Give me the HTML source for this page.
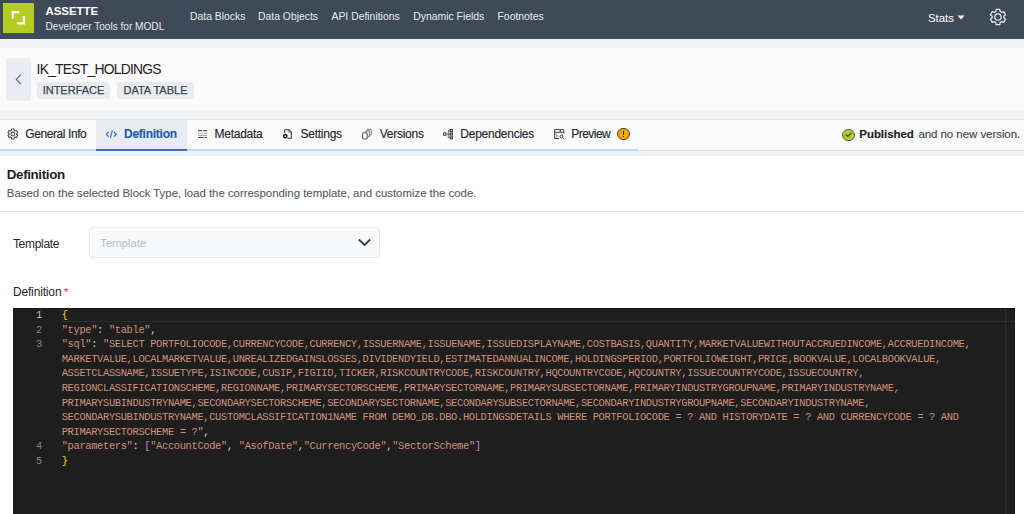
<!DOCTYPE html>
<html><head><meta charset="utf-8">
<style>
*{box-sizing:border-box;margin:0;padding:0}
html,body{width:1024px;height:514px;overflow:hidden;background:#fff;font-family:"Liberation Sans",sans-serif}
.abs{position:absolute;white-space:nowrap}
#hdr{position:absolute;left:0;top:0;width:1024px;height:39px;background:#3e4a57}
#band1{position:absolute;left:0;top:39px;width:1024px;height:9px;background:#eff3f6}
#titlebar{position:absolute;left:0;top:48px;width:1024px;height:62px;background:#fafafa}
#band2{position:absolute;left:0;top:110px;width:1024px;height:10px;background:#eff3f6;border-bottom:1px solid #e3e7ec}
#tabs{position:absolute;left:0;top:120px;width:1024px;height:31px;background:#fafafa}
#band3{position:absolute;left:0;top:151px;width:1024px;height:5px;background:#eff2f5}
.nav{color:#e8ebef;font-size:10.4px;line-height:12px;top:11px}
.tab{font-size:12px;letter-spacing:-0.25px;color:#23272d;line-height:14px;top:7.2px;-webkit-text-stroke:0.15px currentColor}
.badge{background:#e8ecf1;border-radius:4px;height:17.1px;top:81.6px;color:#3a4350;font-size:11px;line-height:16.4px;text-align:center;-webkit-text-stroke:0.25px #3a4350}
#editor{position:absolute;left:13px;top:308px;width:1002px;height:206px;background:#1e1e1e;overflow:hidden}
.ln{position:absolute;left:0;width:29px;text-align:right;color:#858585;font-family:"Liberation Mono",monospace;font-size:10.4px;letter-spacing:-0.35px}
.code{position:absolute;left:48.7px;color:#ce9178;font-family:"Liberation Mono",monospace;font-size:10.4px;letter-spacing:-0.335px;white-space:pre}
.code,.ln{line-height:14px}
.y{color:#ffd700}.w{color:#d4d4d4}.p{color:#da70d6}
</style></head><body>
<div id="hdr">
  <div class="abs" style="left:3px;top:3px;width:31px;height:30px;background:#b5cc22">
    <svg width="31" height="30" style="position:absolute;left:0;top:0">
      <path d="M9.8 15.7V9.2H16.3" fill="none" stroke="#fff" stroke-width="2.3"/>
      <path d="M14.3 20.35H20.95V13.3" fill="none" stroke="#fff" stroke-width="2.3"/>
    </svg>
  </div>
  <div class="abs" style="left:45.5px;top:5px;color:#fff;font-weight:bold;font-size:11.4px;line-height:13px">ASSETTE</div>
  <div class="abs" style="left:45.5px;top:21px;color:#e6e9ec;font-size:10.1px;line-height:12px">Developer Tools for MODL</div>
  <div class="abs nav" style="left:190px">Data Blocks</div>
  <div class="abs nav" style="left:258px">Data Objects</div>
  <div class="abs nav" style="left:331.5px">API Definitions</div>
  <div class="abs nav" style="left:413.3px">Dynamic Fields</div>
  <div class="abs nav" style="left:497.5px">Footnotes</div>
  <div class="abs" style="left:928px;top:11px;color:#fff;font-size:11.4px;line-height:14px">Stats</div>
  <svg class="abs" style="left:957px;top:15px" width="8" height="5"><path d="M0.5 0.5H7.5L4 4.5Z" fill="#fff"/></svg>
  <svg class="abs" style="left:988.1px;top:7.1px" width="20" height="20"><path fill="none" stroke="#e6e9ec" stroke-width="1.25" stroke-linejoin="round" d="M7.79 4.53 L8.23 2.35 L11.77 2.35 L12.21 4.53 L13.63 5.35 L15.74 4.65 L17.51 7.70 L15.84 9.18 L15.84 10.82 L17.51 12.30 L15.74 15.35 L13.63 14.65 L12.21 15.47 L11.77 17.65 L8.23 17.65 L7.79 15.47 L6.37 14.65 L4.26 15.35 L2.49 12.30 L4.16 10.82 L4.16 9.18 L2.49 7.70 L4.26 4.65 L6.37 5.35Z"/><circle cx="10" cy="10" r="3.2" fill="none" stroke="#e6e9ec" stroke-width="1.25"/></svg>
</div>
<div id="band1"></div>
<div id="titlebar">
  <div class="abs" style="left:6px;top:10px;width:25px;height:43px;background:#e9edf2;border-radius:2px">
    <svg width="25" height="43" style="position:absolute;left:0;top:0"><path d="M14.8 16.7L10.3 21.4L14.8 26.1" fill="none" stroke="#5f656d" stroke-width="1.1"/></svg>
  </div>
  <div class="abs" style="left:36.6px;top:13.6px;font-size:13.9px;letter-spacing:-0.78px;color:#1f2328;line-height:15px">IK_TEST_HOLDINGS</div>
</div>
<div class="abs badge" style="left:37px;width:73px">INTERFACE</div>
<div class="abs badge" style="left:117px;width:77px">DATA TABLE</div>
<div id="band2"></div>
<div id="tabs">
  <div class="abs" style="left:96px;top:0;width:91px;height:28.5px;background:#e8ecf2"></div><div class="abs" style="left:0;top:29.6px;width:1024px;height:1px;background:#dfe3e8"></div>
  <div class="abs" style="left:0;top:29px;width:639px;height:1.9px;background:#c2d8f1"></div>
  <div class="abs" style="left:96px;top:29px;width:91px;height:2px;background:#3b70b6"></div>
  <svg class="abs" style="left:0;top:0" width="30" height="30"><path fill="none" stroke="#4a4f56" stroke-width="1.1" stroke-linejoin="round" d="M11.43 10.48 L11.70 9.03 L14.00 9.03 L14.27 10.48 L15.19 11.01 L16.58 10.52 L17.73 12.51 L16.61 13.47 L16.61 14.53 L17.73 15.49 L16.58 17.48 L15.19 16.99 L14.27 17.52 L14.00 18.97 L11.70 18.97 L11.43 17.52 L10.51 16.99 L9.12 17.48 L7.97 15.49 L9.09 14.53 L9.09 13.47 L7.97 12.51 L9.12 10.52 L10.51 11.01Z"/><circle cx="12.85" cy="14" r="1.9" fill="none" stroke="#4a4f56" stroke-width="1.1"/></svg>
  <div class="abs tab" style="left:25.3px;letter-spacing:-0.42px">General Info</div>
  <svg class="abs" style="left:100px;top:0" width="20" height="30"><path d="M8.3 12.2L6.4 14.3L8.3 16.4M14.3 12.2L16.3 14.3L14.3 16.4M12.2 10.8L10.5 17.4" fill="none" stroke="#3f74bb" stroke-width="1.25" stroke-linecap="round" stroke-linejoin="round"/></svg>
  <div class="abs tab" style="left:124px;font-weight:bold;color:#225ca8">Definition</div>
  <svg class="abs" style="left:190px;top:0" width="20" height="30"><path d="M8 10.6H12.2M13.2 10.6H17.1" stroke="#555" stroke-width="1.2"/><path d="M8 13.3H9.3M10.6 13.3H12.6M14 13.3H17.1" stroke="#999" stroke-width="1"/><path d="M8 15.4H17.1" stroke="#888" stroke-width="0.8"/><path d="M8 17.5H13.6M14.6 17.5H17.1" stroke="#444" stroke-width="1.1"/></svg>
  <div class="abs tab" style="left:214.5px">Metadata</div>
  <svg class="abs" style="left:280px;top:0" width="16" height="30"><path d="M4.7 12.8V9.7H8.9L11.3 12.1V18.3H7.4" fill="none" stroke="#3a3a3a" stroke-width="1.05" stroke-linejoin="round"/><path d="M8.8 9.9V12.2H11.1" fill="none" stroke="#555" stroke-width="0.8"/><path fill="#111" fill-rule="evenodd" d="M4.36 14.42 L4.48 13.72 L6.02 13.72 L6.14 14.42 L6.26 14.49 L6.92 14.24 L7.70 15.58 L7.15 16.03 L7.15 16.17 L7.70 16.62 L6.92 17.96 L6.26 17.71 L6.14 17.78 L6.02 18.48 L4.48 18.48 L4.36 17.78 L4.24 17.71 L3.58 17.96 L2.80 16.62 L3.35 16.17 L3.35 16.03 L2.80 15.58 L3.58 14.24 L4.24 14.49Z M6.1 16.1 A0.85 0.85 0 1 0 4.4 16.1 A0.85 0.85 0 1 0 6.1 16.1Z"/></svg>
  <div class="abs tab" style="left:300.5px">Settings</div>
  <svg class="abs" style="left:360px;top:0" width="16" height="30"><path d="M7.6 10.9V9.4H11.3V14.9H9.8" fill="none" stroke="#7a7a7a" stroke-width="0.95" stroke-linejoin="round"/><path d="M5.9 12.6V10.9H9.4V16.8H7.8" fill="none" stroke="#6a6a6a" stroke-width="0.95" stroke-linejoin="round"/><rect x="2.6" y="12.7" width="4.6" height="6.2" rx="1.1" fill="none" stroke="#555" stroke-width="1.05"/></svg>
  <div class="abs tab" style="left:379.7px">Versions</div>
  <svg class="abs" style="left:440px;top:0" width="16" height="30"><rect x="3.6" y="12.9" width="2.2" height="2.4" fill="none" stroke="#444" stroke-width="1"/><path d="M5.8 14.1H8M8.3 10.7V17.4H10M8.3 10.7H10M8.3 14.1H10" fill="none" stroke="#555" stroke-width="0.9"/><rect x="10.2" y="9.5" width="2.2" height="2.1" fill="none" stroke="#333" stroke-width="1.05"/><rect x="10.2" y="13.1" width="2.2" height="2" fill="none" stroke="#333" stroke-width="1.05"/><rect x="10.2" y="16.8" width="2.2" height="2" fill="none" stroke="#333" stroke-width="1.05"/></svg>
  <div class="abs tab" style="left:460.3px">Dependencies</div>
  <svg class="abs" style="left:550px;top:0" width="16" height="30"><path d="M9 18.5H4.6V9.6H13.8V13.5" fill="none" stroke="#444" stroke-width="1"/><path d="M4.6 12.3H13.8M10.2 9.6V12.3" fill="none" stroke="#444" stroke-width="1"/><path d="M6.3 13.3V17.8M6.3 15.2L8.4 16.3" fill="none" stroke="#888" stroke-width="0.8"/><circle cx="11.5" cy="16.4" r="1.5" fill="none" stroke="#333" stroke-width="1"/><path d="M12.6 17.5L14 18.8" stroke="#333" stroke-width="1"/></svg>
  <div class="abs tab" style="left:571.2px;letter-spacing:-0.52px">Preview</div>
  <div class="abs" style="left:617.3px;top:7.8px;width:12.5px;height:12.5px;border-radius:50%;background:#f8a802;border:1px solid #4a4235"></div>
  <div class="abs" style="left:622.9px;top:10.5px;width:1.4px;height:4.2px;background:#2a2a2a"></div>
  <div class="abs" style="left:622.9px;top:15.8px;width:1.4px;height:1.4px;background:#2a2a2a"></div>
  <div class="abs" style="left:842.3px;top:8.6px;width:12.5px;height:12.5px;border-radius:50%;background:#b3ce1f;border:1px solid #56606a"></div>
  <svg class="abs" style="left:842px;top:8px" width="13" height="13"><path d="M4.3 7L5.9 8.4L8.9 5.5" fill="none" stroke="#3a4048" stroke-width="1.3" stroke-linecap="round" stroke-linejoin="round"/></svg>
  <div class="abs tab" style="left:859.3px;top:6.8px;font-weight:bold;color:#1f2328;font-size:11.5px;letter-spacing:-0.05px">Published</div>
  <div class="abs tab" style="left:918.4px;top:6.8px;color:#434a54;font-size:11.5px;letter-spacing:-0.06px">and no new version.</div>
</div>
<div id="band3"></div>
<div class="abs" style="left:6.8px;top:167.1px;font-size:13.4px;letter-spacing:-0.38px;font-weight:bold;color:#1b1f24;line-height:16px">Definition</div>
<div class="abs" style="left:6.8px;top:185.5px;font-size:11.38px;color:#555c65;line-height:14px;-webkit-text-stroke:0.12px #555c65">Based on the selected Block Type, load the corresponding template, and customize the code.</div>
<div class="abs" style="left:0;top:211px;width:1024px;height:1px;background:#e4e8ec"></div>
<div class="abs" style="left:12.9px;top:237.2px;font-size:12px;letter-spacing:-0.3px;color:#24282e;line-height:14px">Template</div>
<div class="abs" style="left:89px;top:227.3px;width:291px;height:30.3px;background:#f8f9fa;border:1px solid #e8ebee;border-radius:3px"></div>
<div class="abs" style="left:100px;top:236px;font-size:11.6px;letter-spacing:-0.12px;color:#b5bfca;line-height:14px">Template</div>
<svg class="abs" style="left:357px;top:237.8px" width="15" height="9"><path d="M1.8 1.5L7.5 7L13.2 1.5" fill="none" stroke="#3a3f46" stroke-width="1.9"/></svg>
<div class="abs" style="left:12.9px;top:284.6px;font-size:12px;letter-spacing:-0.15px;color:#24282e;line-height:14px">Definition<span style="color:#f0302a;margin-left:2.6px;font-size:11.4px">*</span></div>
<div id="editor">
<div class="abs" style="left:49px;top:0.3px;width:960px;height:14px;border:1px solid #2c2c2c;border-right:none"></div>
<div class="abs" style="left:992px;top:0.5px;width:10px;height:206px;border-left:1px solid #2b2b2b"></div><div class="abs" style="left:0;top:0;width:1002px;height:0.8px;background:#161616"></div>
<div class="ln" style="top:0.10px;color:#c6c6c6">1</div>
<div class="code" style="top:0.10px"><span class="y">{</span></div>
<div class="ln" style="top:14.67px;color:#858585">2</div>
<div class="code" style="top:14.67px">"type"<span class="w">: </span>"table"<span class="w">,</span></div>
<div class="ln" style="top:29.24px;color:#858585">3</div>
<div class="code" style="top:29.24px">"sql"<span class="w">: </span>"SELECT PORTFOLIOCODE,CURRENCYCODE,CURRENCY,ISSUERNAME,ISSUENAME,ISSUEDISPLAYNAME,COSTBASIS,QUANTITY,MARKETVALUEWITHOUTACCRUEDINCOME,ACCRUEDINCOME,</div>
<div class="code" style="top:43.81px">MARKETVALUE,LOCALMARKETVALUE,UNREALIZEDGAINSLOSSES,DIVIDENDYIELD,ESTIMATEDANNUALINCOME,HOLDINGSPERIOD,PORTFOLIOWEIGHT,PRICE,BOOKVALUE,LOCALBOOKVALUE,</div>
<div class="code" style="top:58.38px">ASSETCLASSNAME,ISSUETYPE,ISINCODE,CUSIP,FIGIID,TICKER,RISKCOUNTRYCODE,RISKCOUNTRY,HQCOUNTRYCODE,HQCOUNTRY,ISSUECOUNTRYCODE,ISSUECOUNTRY,</div>
<div class="code" style="top:72.95px">REGIONCLASSIFICATIONSCHEME,REGIONNAME,PRIMARYSECTORSCHEME,PRIMARYSECTORNAME,PRIMARYSUBSECTORNAME,PRIMARYINDUSTRYGROUPNAME,PRIMARYINDUSTRYNAME,</div>
<div class="code" style="top:87.52px">PRIMARYSUBINDUSTRYNAME,SECONDARYSECTORSCHEME,SECONDARYSECTORNAME,SECONDARYSUBSECTORNAME,SECONDARYINDUSTRYGROUPNAME,SECONDARYINDUSTRYNAME,</div>
<div class="code" style="top:102.09px">SECONDARYSUBINDUSTRYNAME,CUSTOMCLASSIFICATION1NAME FROM DEMO_DB.DBO.HOLDINGSDETAILS WHERE PORTFOLIOCODE = ? AND HISTORYDATE = ? AND CURRENCYCODE = ? AND</div>
<div class="code" style="top:116.66px">PRIMARYSECTORSCHEME = ?"<span class="w">,</span></div>
<div class="ln" style="top:131.23px;color:#858585">4</div>
<div class="code" style="top:131.23px">"parameters"<span class="w">: </span><span class="p">[</span>"AccountCode"<span class="w">, </span>"AsofDate"<span class="w">,</span>"CurrencyCode"<span class="w">,</span>"SectorScheme"<span class="p">]</span></div>
<div class="ln" style="top:145.80px;color:#858585">5</div>
<div class="code" style="top:145.80px"><span class="y">}</span></div>
</div>
</body></html>
